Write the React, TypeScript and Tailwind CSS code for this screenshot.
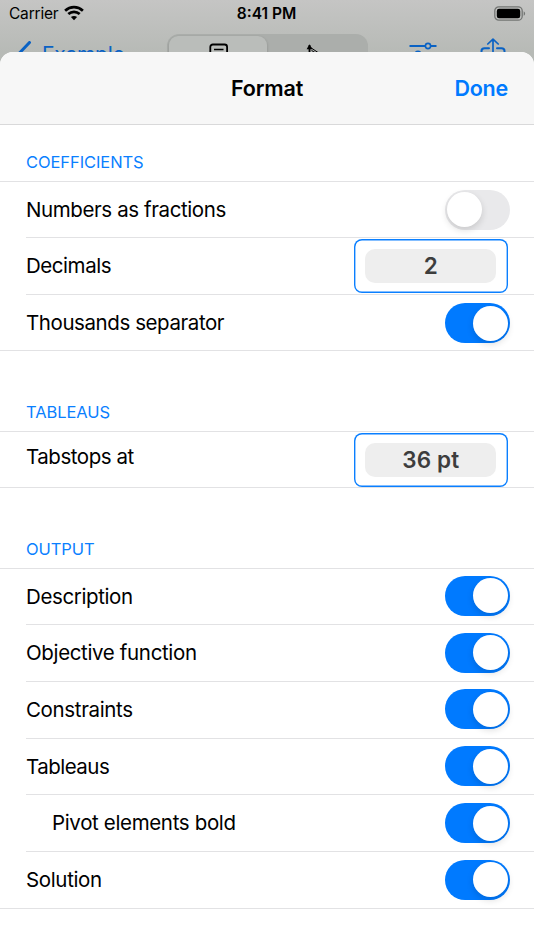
import React from 'react'

interface RowProps {
  label: string
  rowClass: string
  labelClass: string
  indent?: boolean
  last?: boolean
  children: React.ReactNode
}

function Toggle({ on, className = '' }: { on: boolean; className?: string }) {
  return (
    <span
      role="switch"
      aria-checked={on}
      className={`mr-[24px] flex h-[40px] w-[65.5px] flex-shrink-0 items-center rounded-full px-[2.5px] ${
        on ? 'justify-end bg-[#007aff]' : 'justify-start bg-[#e9e9eb]'
      } ${className}`}
    >
      <span className="h-[35px] w-[35px] rounded-full bg-white shadow-[0_3px_7px_rgba(0,0,0,0.14)]" />
    </span>
  )
}

function ValueField({ value, className }: { value: string; className: string }) {
  return (
    <span className="mr-[26px] flex h-[54px] w-[154.5px] flex-shrink-0 items-center justify-center rounded-[8px] shadow-[inset_0_0_0_1.4px_#0a7fff]">
      <span className="flex h-[34px] w-[131px] items-center justify-center rounded-[10px] bg-[#eeeeee]">
        <span className={`text-[22.5px] font-semibold text-[#3d3d3d] ${className}`}>{value}</span>
      </span>
    </span>
  )
}

function Row({ label, rowClass, labelClass, indent, last, children }: RowProps) {
  return (
    <li className={last ? 'border-b border-[#e2e2e4]' : 'pl-[26px]'}>
      <div
        className={`flex items-center justify-between ${
          last ? 'pl-[26px]' : 'border-b border-[#e2e2e4]'
        } ${rowClass}`}
      >
        <span className={`whitespace-nowrap text-[20.5px] leading-6 ${indent ? 'pl-[26px]' : ''} ${labelClass}`}>
          {label}
        </span>
        {children}
      </div>
    </li>
  )
}

function SectionTitle({ title, className }: { title: string; className: string }) {
  return (
    <h2
      className={`flex items-end border-b border-[#e2e2e4] pb-[8px] pl-[26px] text-[16.5px] leading-[22px] tracking-[-0.08px] text-[#0a7fff] ${className}`}
    >
      {title}
    </h2>
  )
}

function StatusBar() {
  return (
    <div className="flex h-[28px] items-center justify-between pl-[9px] pr-[8px]">
      <div className="flex w-[200px] items-center gap-[6px]">
        <span className="text-[15.5px] tracking-[-0.2px]">Carrier</span>
        <svg width="20" height="16" viewBox="0 0 20 16" fill="none" stroke="black" strokeWidth="2.7" className="mt-[-2px]">
          <path d="M1.1 5.7C6.2 1 13.8 1 18.9 5.7" />
          <path d="M4.3 9.1C7.6 6.1 12.4 6.1 15.7 9.1" />
          <path d="M10 15.2L6.9 12.1C8.7 10.5 11.3 10.5 13.1 12.1Z" fill="black" stroke="none" />
        </svg>
      </div>
      <span className="mr-[2px] text-[15.5px] font-semibold">8:41 PM</span>
      <div className="flex w-[200px] justify-end">
        <svg width="32" height="15" viewBox="0 0 32 15" className="mt-[-2px]">
          <rect x="0.8" y="0.8" width="27.4" height="13.4" rx="4" fill="none" stroke="#737573" strokeWidth="1.3" />
          <rect x="2.8" y="2.7" width="23.4" height="9.6" rx="2.2" fill="black" />
          <path d="M29.7 5.2C31.6 6 31.6 9 29.7 9.8Z" fill="#737573" />
        </svg>
      </div>
    </div>
  )
}

// Taller than its slot: the sheet covers everything but the top edge.
function NavBar() {
  return (
    <div className="flex h-[24px] items-start pl-[17px] text-[#0a62c4]">
      <svg width="16" height="26" viewBox="0 0 16 26" className="mt-[13px]" fill="none" stroke="currentColor" strokeWidth="3" strokeLinecap="round">
        <path d="M12.5 1.5L2.5 12L12.5 23" />
      </svg>
      <span className="ml-[9px] mt-[15px] w-[124.5px] text-[21px] leading-[24px] tracking-[-0.3px]">Example</span>
      <div className="mt-[5.5px] flex h-[43px] w-[201px] rounded-[12px] bg-[#abaeab] p-[2px] text-black">
        <div className="flex h-[39px] w-[98.5px] justify-center rounded-[9px] bg-[#babdba] shadow-[0_1px_3px_rgba(0,0,0,0.2)]">
          <svg width="20" height="24" viewBox="0 0 20 24" className="ml-[2px] mt-[7px]" fill="none" stroke="currentColor">
            <rect x="1.3" y="1.5" width="16.8" height="20" rx="2.5" strokeWidth="1.8" />
            <path d="M5 6.5H14.5M5 10.5H14.5" strokeWidth="1.3" />
          </svg>
        </div>
        <div className="flex w-[98px] justify-center pr-[12px]">
          <svg width="20" height="24" viewBox="0 0 20 24" className="mt-[7px]" stroke="currentColor">
            <path d="M9.5 2V16" strokeWidth="1.8" />
            <path d="M9.5 1.2L6.6 6.2H12.4Z" stroke="none" fill="currentColor" />
            <path d="M11 4.8L18 9.5M11.5 7.4L16.5 10.5" strokeWidth="1" />
          </svg>
        </div>
      </div>
      <svg width="28" height="22" viewBox="0 0 28 22" className="ml-[41.5px] mt-[14px]" fill="none" stroke="currentColor" strokeWidth="2">
        <path d="M0.5 4H16M22 4H27.5M0.5 12H6M12 12H27.5" />
        <circle cx="19" cy="4" r="2.6" strokeWidth="1.6" />
        <circle cx="9" cy="12" r="2.8" strokeWidth="1.6" />
      </svg>
      <svg width="26" height="32" viewBox="0 0 26 32" className="ml-[43px] mt-[10px]" fill="none" stroke="currentColor" strokeWidth="2" strokeLinecap="round" strokeLinejoin="round">
        <path d="M13 18V1.3M7.8 6L13 1.1L18.2 6" strokeWidth="1.7" />
        <path d="M9 10.3H4.5C2.5 10.3 1.5 11.3 1.5 13V25H24.5V13C24.5 11.3 23.5 10.3 21.5 10.3H17" />
      </svg>
    </div>
  )
}

export default function App() {
  return (
    <div className="h-[950px] w-[534px] overflow-hidden bg-linear-to-b from-[#c5c5c4] to-[#b7bab6] to-[52px] font-['Inter','Liberation_Sans',sans-serif] text-black">
      <StatusBar />
      <NavBar />
      <main className="relative z-10 h-[898px] overflow-hidden rounded-t-[13px] bg-white">
        <header className="flex h-[73px] items-center justify-between border-b border-[#d9d9da] bg-[#f7f7f7] px-[26px]">
          <span className="w-[80px]" />
          <h1 className="text-[21.5px] font-semibold tracking-[-0.15px]">Format</h1>
          <button className="w-[80px] whitespace-nowrap text-right text-[21.5px] font-semibold tracking-[-0.25px] text-[#007aff]">
            Done
          </button>
        </header>

        <section>
          <SectionTitle title="COEFFICIENTS" className="h-[57px]" />
          <ul>
            <Row label="Numbers as fractions" rowClass="h-[56px]" labelClass="tracking-[-0.4px]">
              <Toggle on={false} />
            </Row>
            <Row label="Decimals" rowClass="h-[57px]" labelClass="tracking-[-0.45px]">
              <ValueField value="2" className="" />
            </Row>
            <Row label="Thousands separator" rowClass="h-[55px]" labelClass="tracking-[-0.42px]" last>
              <Toggle on className="mt-[1.5px]" />
            </Row>
          </ul>
        </section>

        <section>
          <SectionTitle title="TABLEAUS" className="h-[81px]" />
          <ul>
            <Row label="Tabstops at" rowClass="h-[55px]" labelClass="pb-[5px] tracking-[-0.45px]" last>
              <ValueField value="36 pt" className="tracking-[0.1px]" />
            </Row>
          </ul>
        </section>

        <section>
          <SectionTitle title="OUTPUT" className="h-[81px]" />
          <ul>
            <Row label="Description" rowClass="h-[56px]" labelClass="tracking-[-0.38px]">
              <Toggle on className="mb-[1.5px]" />
            </Row>
            <Row label="Objective function" rowClass="h-[57px]" labelClass="tracking-[-0.35px]">
              <Toggle on className="mb-[1px]" />
            </Row>
            <Row label="Constraints" rowClass="h-[57px]" labelClass="tracking-[-0.35px]">
              <Toggle on className="mb-[1.5px]" />
            </Row>
            <Row label="Tableaus" rowClass="h-[56px]" labelClass="tracking-[-0.52px]">
              <Toggle on className="mb-[1px]" />
            </Row>
            <Row label="Pivot elements bold" rowClass="h-[57px]" labelClass="tracking-[-0.35px]" indent>
              <Toggle on />
            </Row>
            <Row label="Solution" rowClass="h-[56px]" labelClass="tracking-[-0.35px]" last>
              <Toggle on className="mb-[1px]" />
            </Row>
          </ul>
        </section>
      </main>
    </div>
  )
}
